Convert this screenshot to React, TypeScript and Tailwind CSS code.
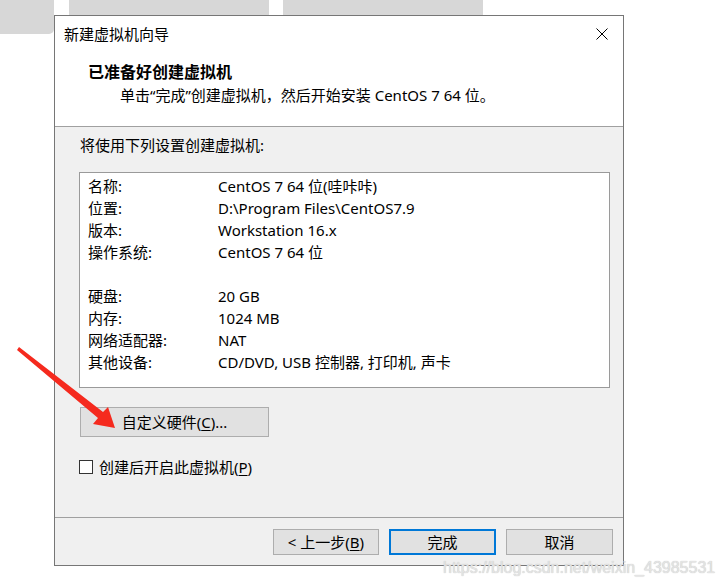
import React from "react";

const FONT = { fontFamily: '"Noto Sans", "Noto Sans CJK SC", sans-serif' };

const rows: [string, string][] = [
  ["名称:", "CentOS 7 64 位(哇咔咔)"],
  ["位置:", "D:\\Program Files\\CentOS7.9"],
  ["版本:", "Workstation 16.x"],
  ["操作系统:", "CentOS 7 64 位"],
  ["", ""],
  ["硬盘:", "20 GB"],
  ["内存:", "1024 MB"],
  ["网络适配器:", "NAT"],
  ["其他设备:", "CD/DVD, USB 控制器, 打印机, 声卡"],
];

export default function App() {
  return (
    <div
      className="relative w-[722px] h-[587px] bg-white overflow-hidden text-black"
      style={FONT}
    >
      {/* backdrop windows */}
      <div className="absolute left-0 top-0 w-[54px] h-[34px] bg-[#d7d7d7] rounded-br-[5px]" />
      <div className="absolute left-[69px] top-0 w-[200px] h-[15px] bg-[#d7d7d7]" />
      <div className="absolute left-[283px] top-0 w-[200px] h-[15px] bg-[#d7d7d7]" />

      {/* dialog */}
      <div className="relative ml-[54px] mt-[15px] w-[570px] h-[551px] border border-[#767676] bg-[#f0f0f0] flex flex-col">
        {/* header */}
        <div className="h-[111px] bg-white border-b border-[#a0a0a0] flex flex-col">
          <div className="h-[36px] flex items-center justify-between pl-[9px] pr-[15px]">
            <span className="text-[15px] leading-[22px]">新建虚拟机向导</span>
            <svg width="12" height="12" viewBox="0 0 12 12">
              <path d="M0.5 0.5 L11.5 11.5 M11.5 0.5 L0.5 11.5" stroke="#000" strokeWidth="1" fill="none" />
            </svg>
          </div>
          <div className="mt-[9px] pl-[33px] text-[16px] leading-[22px] font-bold">已准备好创建虚拟机</div>
          <div className="mt-[1px] pl-[65px] text-[15px] leading-[22px]">
            单击“完成”创建虚拟机，然后开始安装 CentOS 7 64 位。
          </div>
        </div>

        {/* body */}
        <div className="h-[390px] flex flex-col items-start">
          <div className="pt-[7px] pl-[25px] text-[15px] leading-[22px]">将使用下列设置创建虚拟机:</div>
          <div className="mt-[16px] ml-[24px] w-[531px] h-[216px] border border-[#9a9a9a] bg-white pt-[2px] pl-[8px] flex flex-col">
            {rows.map(([k, v], i) => (
              <div key={i} className="flex h-[22px] items-center text-[15px] leading-[22px]">
                <span className="w-[130px] shrink-0">{k}</span>
                <span className="whitespace-nowrap">{v}</span>
              </div>
            ))}
          </div>
          <div className="mt-[19px] ml-[25px] w-[189px] h-[30px] bg-[#e1e1e1] border border-[#adadad] flex items-center justify-center text-[15px] leading-[22px]">
            <span>
              自定义硬件(<span className="underline underline-offset-2">C</span>)...
            </span>
          </div>
          <div className="mt-[19px] ml-[24px] flex items-center gap-[6px]">
            <div className="w-[14px] h-[14px] border border-[#333333] bg-white" />
            <span className="text-[15px] leading-[22px]">
              创建后开启此虚拟机(<span className="underline underline-offset-2">P</span>)
            </span>
          </div>
        </div>

        {/* footer */}
        <div className="flex-1 border-t border-[#a0a0a0] flex justify-end items-start pt-[11px] pr-[10px] gap-[10px]">
          <div className="w-[106px] h-[26px] bg-[#e1e1e1] border border-[#adadad] flex items-center justify-center text-[15px] leading-[22px]">
            <span>
              &lt; 上一步(<span className="underline underline-offset-2">B</span>)
            </span>
          </div>
          <div className="w-[107px] h-[26px] bg-[#e1e1e1] border-2 border-[#0078d7] flex items-center justify-center text-[15px] leading-[22px]">
            完成
          </div>
          <div className="w-[107px] h-[26px] bg-[#e1e1e1] border border-[#adadad] flex items-center justify-center text-[15px] leading-[22px]">
            取消
          </div>
        </div>
      </div>

      {/* red arrow annotation */}
      <svg className="absolute left-0 top-0" width="722" height="587" viewBox="0 0 722 587">
        <polygon
          points="17,350 19,347 103,412 108,407 115,428 93,424 98,418"
          fill="#f52a1e"
        />
      </svg>

      {/* watermark */}
      <div
        className="absolute left-[443px] top-[558px] text-[16px] leading-[20px] text-[#e4e4e4] whitespace-nowrap [text-shadow:0_0_1px_#b8b8b8]"
        style={{ fontFamily: '"Liberation Sans", Arial, sans-serif' }}
      >
        https://blog.csdn.net/weixin_43985531
      </div>
    </div>
  );
}
